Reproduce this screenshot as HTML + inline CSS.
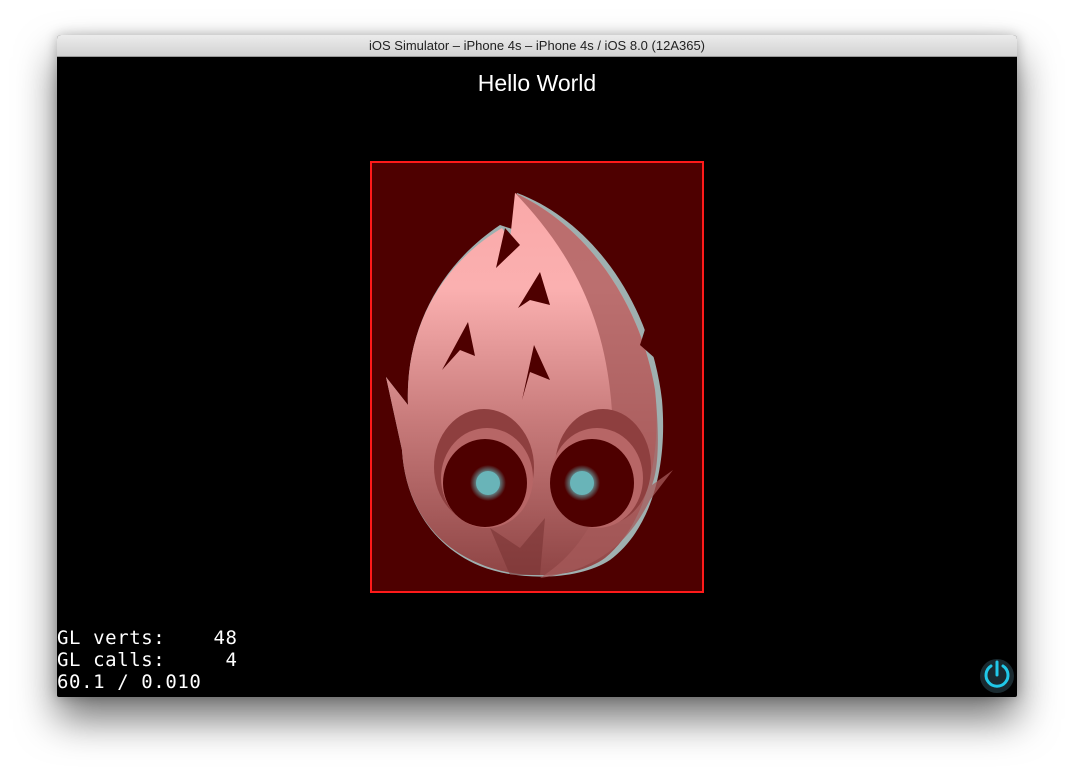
<!DOCTYPE html>
<html><head><meta charset="utf-8"><style>
html,body{margin:0;padding:0;width:1074px;height:776px;background:#fff;overflow:hidden;font-family:"Liberation Sans",sans-serif}
.win{position:absolute;left:57px;top:35px;width:960px;height:662px;border-radius:4px 4px 2px 2px;box-shadow:0 22px 40px rgba(0,0,0,.55),0 0 12px rgba(0,0,0,.25);background:#000;overflow:hidden}
.tb{position:absolute;left:0;top:0;width:960px;height:21px;background:linear-gradient(#ececec,#d2d2d2);border-bottom:1px solid #9a9a9a;text-align:center;font-size:13px;line-height:22px;color:#222}
.hw{position:absolute;left:0;width:1074px;top:70px;text-align:center;color:#fff;font-size:23px}
.gl{position:absolute;left:57px;top:627px;color:#fff;font-family:"DejaVu Sans Mono","Liberation Mono",monospace;font-size:19px;letter-spacing:0.6px;line-height:22px;white-space:pre}
</style></head><body>
<div class="win"><div class="tb">iOS Simulator – iPhone 4s – iPhone 4s / iOS 8.0 (12A365)</div></div>
<div class="hw">Hello World</div>
<svg width="1074" height="776" style="position:absolute;left:0;top:0">
<defs>
<linearGradient id="g" x1="0" y1="0" x2="0" y2="1"><stop offset="0" stop-color="#f9a8a8"/><stop offset=".25" stop-color="#fbb0b0"/><stop offset=".6" stop-color="#c77a7a"/><stop offset="1" stop-color="#8f4545"/></linearGradient>
<radialGradient id="pg"><stop offset=".5" stop-color="#69b4b8"/><stop offset="1" stop-color="#69b4b8" stop-opacity="0"/></radialGradient>
</defs>
<rect x="371" y="162" width="332" height="430" fill="#4e0000" stroke="#ff1a1a" stroke-width="2"/>
<path d="M517,193 C590,220 650,300 662,400 C668,470 650,530 610,560 C580,580 520,582 480,566 C430,545 405,500 402,450 L386,377 L408,405 C405,330 440,265 500,225 L515,230 Z" fill="#9fb0b0"/>
<path d="M515,193 C585,225 640,300 655,390 C662,460 645,525 605,558 C575,580 515,580 478,563 C430,543 405,500 402,450 L386,377 L408,405 C405,330 440,265 502,228 L510,240 Z" fill="url(#g)"/>
<path d="M515,193 C585,225 640,300 655,390 C660,440 658,470 652,485 L673,470 L650,500 C630,540 600,570 540,578 C600,540 620,470 610,390 C600,300 560,240 515,193 Z" fill="#a55a5a" opacity=".75"/>
<path d="M648,320 L657,360 L640,345 Z" fill="#4e0000"/>
<path d="M505,228 L496,268 L520,245 Z M540,272 L518,308 L530,300 L550,305 Z M468,322 L442,370 L460,350 L475,356 Z M534,345 L522,400 L530,372 L550,380 Z" fill="#4e0000"/>
<ellipse cx="484" cy="467" rx="50" ry="58" fill="#8e3f3f"/>
<ellipse cx="603" cy="467" rx="48" ry="58" fill="#8e3f3f"/>
<ellipse cx="487" cy="478" rx="46" ry="50" fill="#b76666"/>
<ellipse cx="597" cy="478" rx="46" ry="50" fill="#b76666"/>
<ellipse cx="485" cy="483" rx="42" ry="44" fill="#4e0000"/>
<ellipse cx="592" cy="483" rx="42" ry="44" fill="#4e0000"/>
<circle cx="488" cy="483" r="18" fill="url(#pg)"/><circle cx="582" cy="483" r="18" fill="url(#pg)"/>
<circle cx="488" cy="483" r="12" fill="#69b4b8"/><circle cx="582" cy="483" r="12" fill="#69b4b8"/>
<path d="M490,528 L520,548 L545,518 L540,575 L510,575 Z" fill="#7a3333" opacity=".6"/>
<circle cx="997" cy="676" r="17" fill="#1a2a30"/>
<path d="M991,666 A11,11 0 1 0 1003,666" fill="none" stroke="#20c8e8" stroke-width="3" stroke-linecap="round"/>
<line x1="997" y1="662" x2="997" y2="675" stroke="#20c8e8" stroke-width="3" stroke-linecap="round"/>
</svg>
<div class="gl">GL verts:    48
GL calls:     4
60.1 / 0.010</div>
</body></html>
